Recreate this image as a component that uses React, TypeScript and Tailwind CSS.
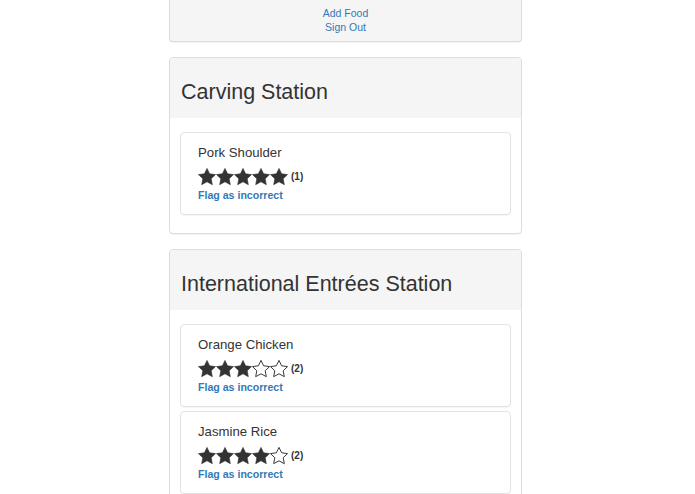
import React from "react";

const FONT = { fontFamily: '"Liberation Sans", Arial, Helvetica, sans-serif' };

function Star({ filled }: { filled: boolean }) {
  return (
    <svg width="18" height="18" viewBox="0 0 24 24" className="block">
      <polygon
        points="12,0.5 15.5,7.7 23.4,8.8 17.6,14.3 19.1,22.2 12,18.4 4.9,22.2 6.4,14.3 0.6,8.8 8.5,7.7"
        fill={filled ? "#333333" : "none"}
        stroke="#333333"
        strokeWidth={filled ? 0.8 : 1.3}
        strokeLinejoin="miter"
      />
    </svg>
  );
}

function Item({ name, rating, count }: { name: string; rating: number; count: number }) {
  return (
    <div className="border border-[#e3e3e3] rounded-[4px] bg-white pl-[17px] pt-[11px] pb-[12px] shadow-[0_1px_1px_rgba(0,0,0,0.04)]">
      <div className="text-[13.2px] leading-[18px] text-[#333]">{name}</div>
      <div className="flex items-center mt-[6px] h-[18px]">
        {[0, 1, 2, 3, 4].map((i) => (
          <Star key={i} filled={i < rating} />
        ))}
        <span className="ml-[3px] text-[10px] font-bold text-[#333] leading-none">({count})</span>
      </div>
      <div className="text-[10.6px] leading-[14px] font-bold text-[#337ab7] mt-[2px]">Flag as incorrect</div>
    </div>
  );
}

function Station({ title, children }: { title: string; children: React.ReactNode }) {
  return (
    <div className="mt-[15px] border border-[#ddd] rounded-[4px] bg-white shadow-[0_1px_1px_rgba(0,0,0,0.05)]">
      <div className="bg-[#f5f5f5] rounded-t-[4px] pl-[11px] pt-[22px] pb-[14px]">
        <h3 className="text-[21.5px] leading-[24px] text-[#333] font-normal">{title}</h3>
      </div>
      <div className="px-[10px] pt-[14px] pb-[18px] flex flex-col gap-[4px]">{children}</div>
    </div>
  );
}

export default function App() {
  return (
    <div className="min-h-[494px] bg-white" style={FONT}>
      <div className="ml-[169px] w-[353px]">
        <div className="border border-t-0 border-[#ddd] rounded-b-[4px] bg-[#f5f5f5] pt-[6px] pb-[7px] flex flex-col items-center shadow-[0_1px_1px_rgba(0,0,0,0.05)]">
          <a className="text-[10.5px] leading-[14px] text-[#337ab7]">Add Food</a>
          <a className="text-[10.5px] leading-[14px] text-[#337ab7]">Sign Out</a>
        </div>
        <Station title="Carving Station">
          <Item name="Pork Shoulder" rating={5} count={1} />
        </Station>
        <Station title="International Entrées Station">
          <Item name="Orange Chicken" rating={3} count={2} />
          <Item name="Jasmine Rice" rating={4} count={2} />
        </Station>
      </div>
    </div>
  );
}
